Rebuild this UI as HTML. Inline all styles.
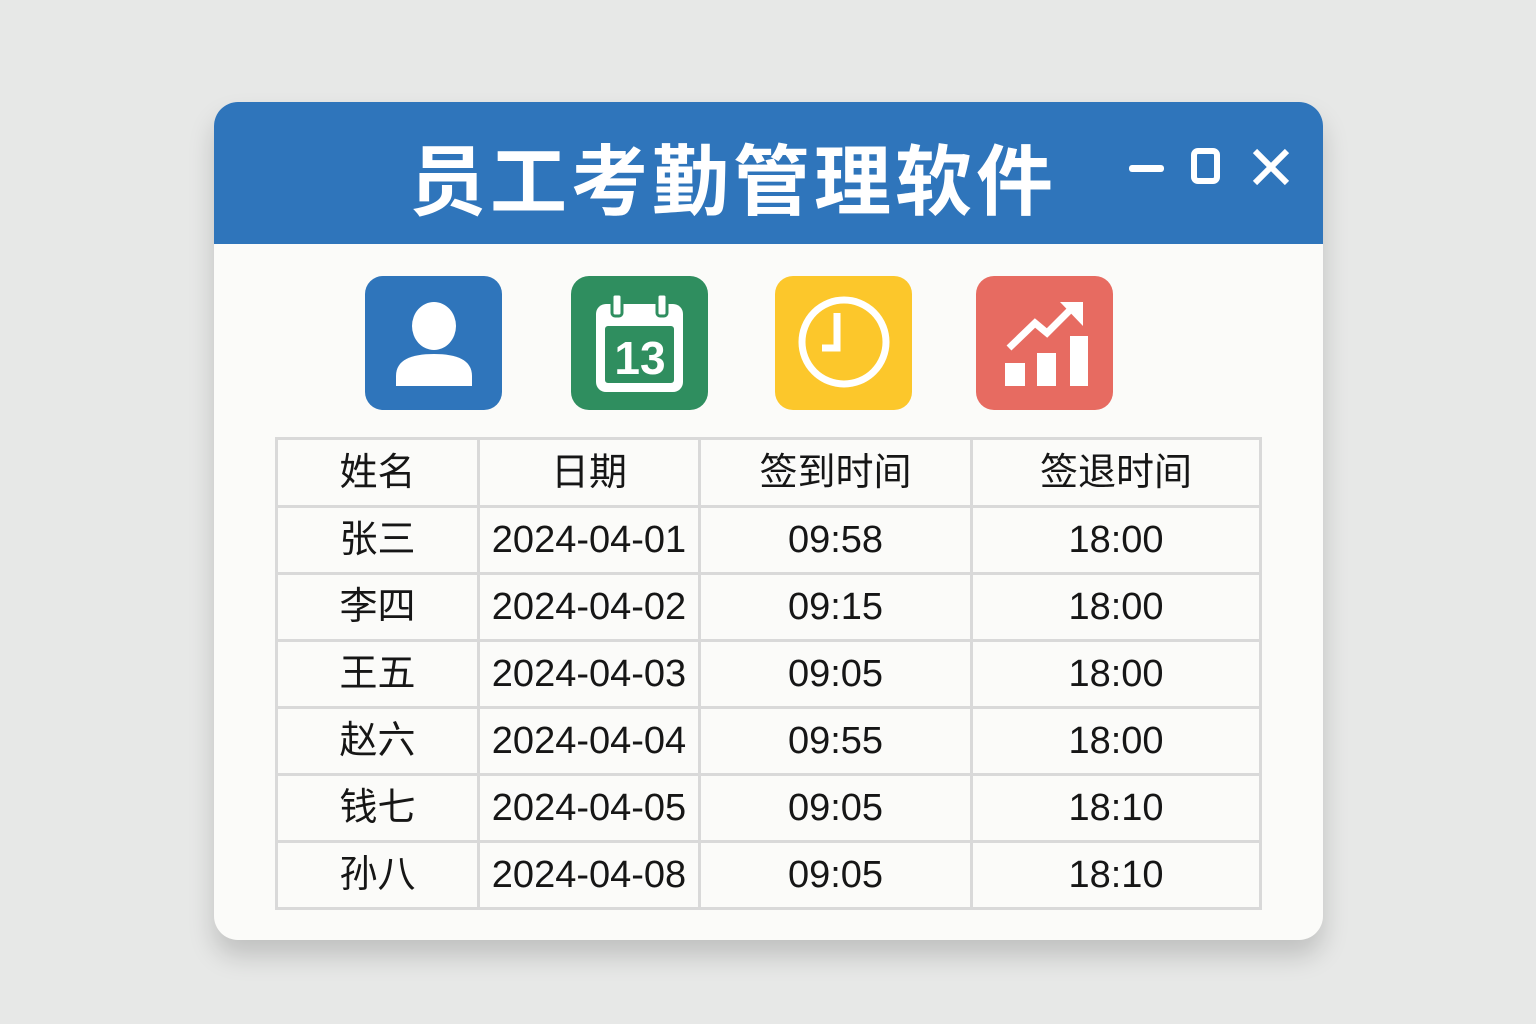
<!DOCTYPE html>
<html><head><meta charset="utf-8"><style>
html,body{margin:0;padding:0;width:1536px;height:1024px;background:#e7e8e7;overflow:hidden;font-family:"Liberation Sans","Noto Sans CJK SC",sans-serif}
.win{position:absolute;left:214px;top:102px;width:1109px;height:838px;background:#fbfbf9;border-radius:24px;overflow:hidden;box-shadow:0 16px 26px rgba(0,0,0,0.17)}
.hdr{position:absolute;left:0;top:0;width:1109px;height:142px;background:#2f75bb}
.title{position:absolute;left:194px;top:36px;width:650px;text-align:center;color:#fff;font-size:77px;font-weight:bold;letter-spacing:4px;line-height:90px;white-space:nowrap}
.ic{position:absolute;top:174px;width:137px;height:134px;border-radius:18px}
table{position:absolute;left:61px;top:335px;border-collapse:collapse;font-size:38px;color:#161616}
td{border:3px solid #d9d9d9;text-align:center;height:64px;padding:0;line-height:64px}
tr.h td{height:65px}
</style></head><body>
<div class="win">
<div class="hdr">
<div class="title">员工考勤管理软件</div>
<svg style="position:absolute;left:900px;top:40px" width="190" height="60" viewBox="0 0 190 60">
<rect x="15" y="23" width="35" height="7" rx="3" fill="#fff"/>
<rect x="80" y="9" width="23" height="30" rx="4" fill="none" stroke="#fff" stroke-width="6"/>
<path d="M141 9 L173 41 M173 9 L141 41" stroke="#fff" stroke-width="6"/>
</svg>
</div>
<div class="ic" style="left:151px;background:#2f75bb"><svg width="137" height="134">
<ellipse cx="69" cy="50" rx="22" ry="24" fill="#fff"/>
<path d="M31 110 L31 100 C31 84 46 78 69 78 C92 78 107 84 107 100 L107 110 Z" fill="#fff"/></svg></div>
<div class="ic" style="left:357px;background:#2f8e5f"><svg width="137" height="134">
<rect x="25" y="28" width="87" height="88" rx="10" fill="#fff"/>
<rect x="34" y="50" width="69" height="57" rx="3" fill="#2f8e5f"/>
<rect x="41" y="18" width="10" height="22" rx="3" fill="#fff" stroke="#2f8e5f" stroke-width="3"/>
<rect x="86" y="18" width="10" height="22" rx="3" fill="#fff" stroke="#2f8e5f" stroke-width="3"/>
<text x="69" y="98" text-anchor="middle" fill="#fff" font-size="46" font-weight="bold" font-family="Liberation Sans,sans-serif">13</text></svg></div>
<div class="ic" style="left:561px;background:#fcc72b"><svg width="137" height="134">
<circle cx="69" cy="66" r="42" fill="none" stroke="#fff" stroke-width="7"/>
<path d="M62 37 L62 72 L47 72" fill="none" stroke="#fff" stroke-width="7"/></svg></div>
<div class="ic" style="left:762px;background:#e76b61"><svg width="138" height="134">
<rect x="29" y="87" width="20" height="23" fill="#fff"/><rect x="61" y="77" width="19" height="33" fill="#fff"/><rect x="94" y="60" width="18" height="50" fill="#fff"/>
<path d="M33 72 L59 47 L71 57 L97 31" fill="none" stroke="#fff" stroke-width="7"/>
<path d="M84 26 L107 26 L107 50 Z" fill="#fff"/></svg></div>
<table>
<colgroup><col style="width:202px"><col style="width:221px"><col style="width:272px"><col style="width:289px"></colgroup>
<tr class="h"><td>姓名</td><td>日期</td><td>签到时间</td><td>签退时间</td></tr>
<tr><td>张三</td><td>2024-04-01</td><td>09:58</td><td>18:00</td></tr>
<tr><td>李四</td><td>2024-04-02</td><td>09:15</td><td>18:00</td></tr>
<tr><td>王五</td><td>2024-04-03</td><td>09:05</td><td>18:00</td></tr>
<tr><td>赵六</td><td>2024-04-04</td><td>09:55</td><td>18:00</td></tr>
<tr><td>钱七</td><td>2024-04-05</td><td>09:05</td><td>18:10</td></tr>
<tr><td>孙八</td><td>2024-04-08</td><td>09:05</td><td>18:10</td></tr>
</table>
</div>
</body></html>
